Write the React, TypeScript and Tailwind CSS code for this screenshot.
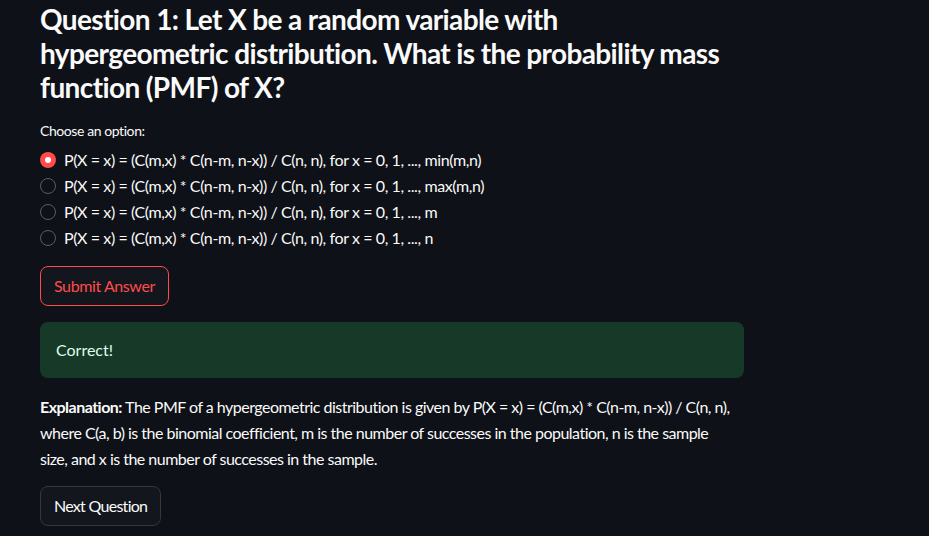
import React, { useState } from 'react';

const options = [
    'P(X = x) = (C(m,x) * C(n-m, n-x)) / C(n, n), for x = 0, 1, ..., min(m,n)',
    'P(X = x) = (C(m,x) * C(n-m, n-x)) / C(n, n), for x = 0, 1, ..., max(m,n)',
    'P(X = x) = (C(m,x) * C(n-m, n-x)) / C(n, n), for x = 0, 1, ..., m',
    'P(X = x) = (C(m,x) * C(n-m, n-x)) / C(n, n), for x = 0, 1, ..., n',
];

const Radio = ({ checked }: { checked: boolean }) =>
    checked ? (
        <span className="w-4 h-4 rounded-full bg-[#ff4b4b] flex items-center justify-center shrink-0">
            <span className="w-1.5 h-1.5 rounded-full bg-white" />
        </span>
    ) : (
        <span className="w-4 h-4 rounded-full border border-[#5a5d66] bg-[#0e1117] shrink-0" />
    );

export default function App() {
    const [selected, setSelected] = useState(0);

    return (
        <div
            className="min-h-screen bg-[#0e1117] text-[#fafafa] overflow-hidden"
            style={{ fontFamily: 'Lato, "Noto Sans", sans-serif' }}
        >
            <div className="w-[704px] ml-10 pt-[2px]">
                {/* Question */}
                <h3 className="text-[28px] leading-[34px] font-bold tracking-[-0.022em]">
                    Question 1: Let X be a random variable with hypergeometric distribution. What is the probability mass function (PMF) of X?
                </h3>

                {/* Options */}
                <p className="mt-4 text-sm leading-[21px] tracking-[-0.03em]">Choose an option:</p>
                <div className="mt-[6px] flex flex-col">
                    {options.map((opt, idx) => (
                        <label
                            key={idx}
                            className="flex items-center gap-2 h-[26px] text-base cursor-pointer"
                            onClick={() => setSelected(idx)}
                        >
                            <Radio checked={selected === idx} />
                            <span className="tracking-[-0.025em]">{opt}</span>
                        </label>
                    ))}
                </div>

                {/* Submit */}
                <button className="mt-[15px] h-10 px-[13px] rounded-lg border border-[#ff4b4b] bg-[#13161d] text-[#ff4b4b] text-base tracking-[-0.025em]">
                    Submit Answer
                </button>

                {/* Result */}
                <div className="mt-4 h-14 rounded-lg bg-[#173928] px-4 flex items-center text-[#dffde9] text-base">
                    Correct!
                </div>

                {/* Explanation */}
                <p className="mt-4 w-[712px] text-base leading-[26px] tracking-[-0.032em]">
                    <span className="font-bold">Explanation:</span> The PMF of a hypergeometric distribution is given by P(X = x) = (C(m,x) * C(n-m, n-x)) / C(n, n), where C(a, b) is the binomial coefficient, m is the number of successes in the population, n is the sample
                    <br />
                    size, and x is the number of successes in the sample.
                </p>

                {/* Next */}
                <button className="mt-[14px] h-10 px-[13px] rounded-lg border border-[#34373e] bg-[#13161d] text-[#fafafa] text-base tracking-[-0.045em]">
                    Next Question
                </button>
            </div>
        </div>
    );
}
